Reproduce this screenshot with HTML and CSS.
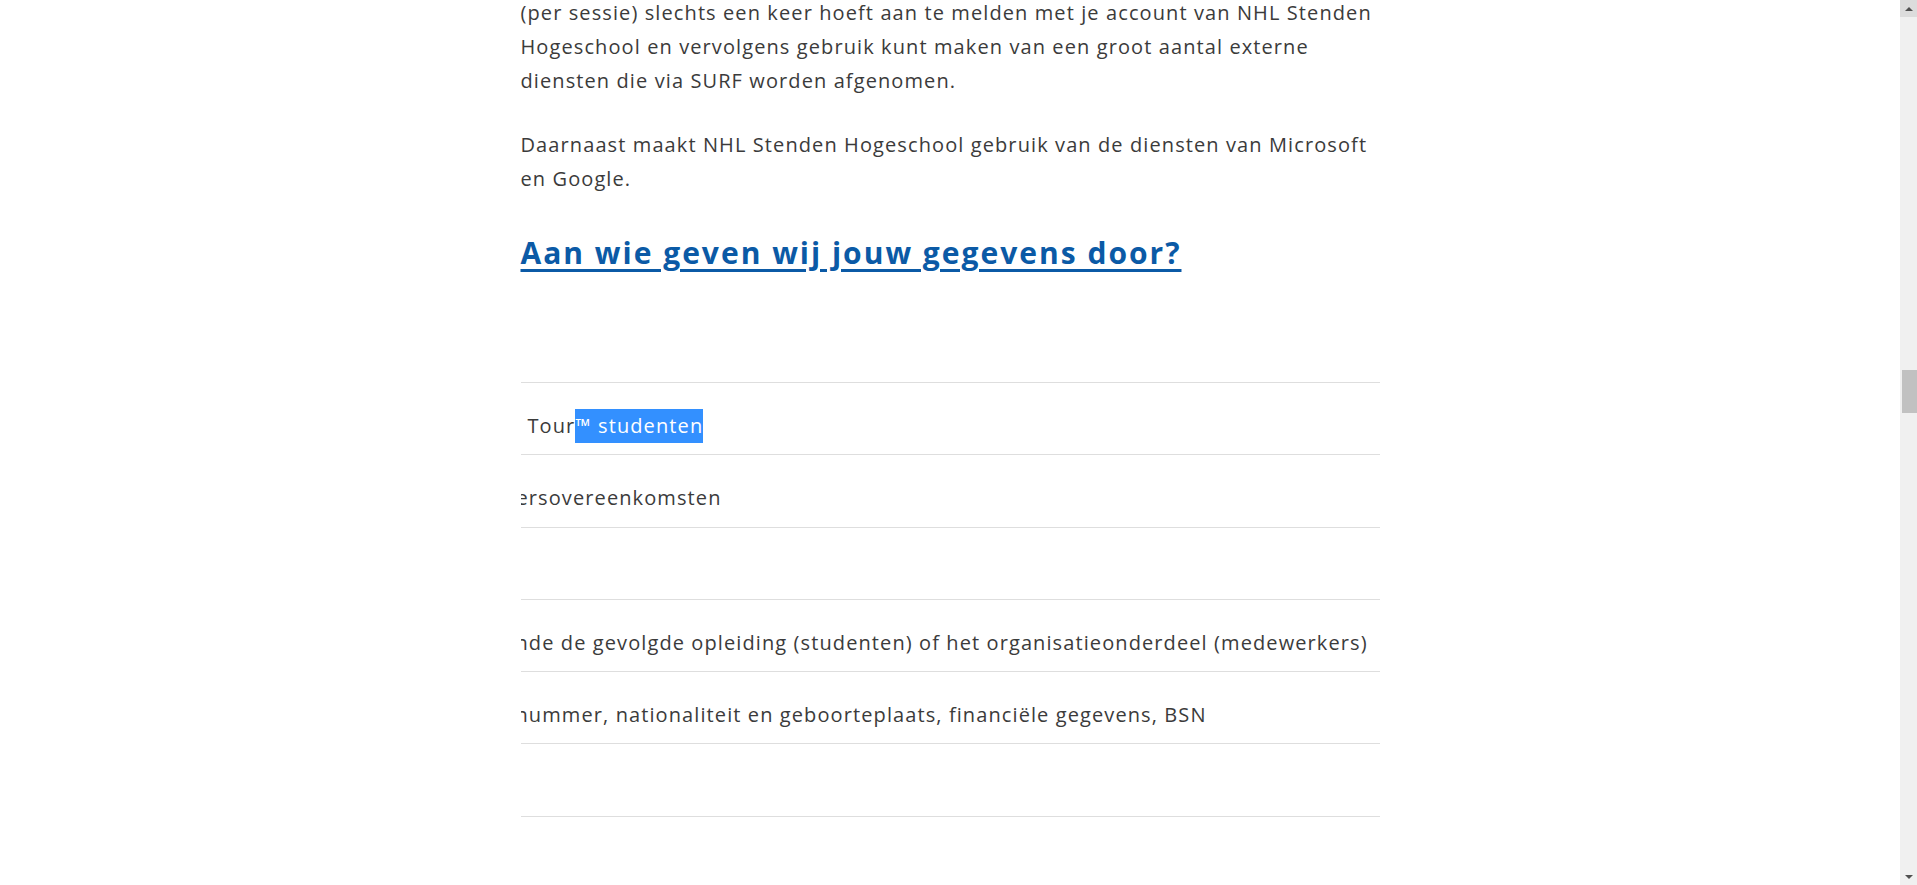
FILE: index.html
```html
<!DOCTYPE html>
<html lang="nl">
<head>
<meta charset="utf-8">
<title>Privacy</title>
<link rel="stylesheet" href="styles.css">
</head>
<body>
<div class="page">
  <div class="viewport">
    <main class="content">
      <p class="para">(per sessie) slechts een keer hoeft aan te melden met je account van NHL Stenden Hogeschool en vervolgens gebruik kunt maken van een groot aantal externe diensten die via SURF worden afgenomen.</p>
      <p class="para">Daarnaast maakt NHL Stenden Hogeschool gebruik van de diensten van Microsoft en Google.</p>
      <h2 class="heading"><a href="#" class="heading-link">Aan wie geven wij jouw gegevens door?</a></h2>
      <div class="table">
        <div class="row"><span class="cell cell-tour">Tour<span class="selected">™ studenten</span></span></div>
        <div class="row"><span class="cell cell-clip-e">ersovereenkomsten</span></div>
        <div class="row"><span class="cell"></span></div>
        <div class="row"><span class="cell cell-clip-n">nde de gevolgde opleiding (studenten) of het organisatieonderdeel (medewerkers)</span></div>
        <div class="row"><span class="cell cell-clip-n">nummer, nationaliteit en geboorteplaats, financiële gegevens, BSN</span></div>
        <div class="row"><span class="cell"></span></div>
        <div class="row row-last"><span class="cell"></span></div>
      </div>
    </main>
  </div>
  <div class="scrollbar">
    <div class="sb-btn sb-up"><span class="arrow-up"></span></div>
    <div class="sb-track"><div class="sb-thumb"></div></div>
    <div class="sb-btn sb-down"><span class="arrow-down"></span></div>
  </div>
</div>
</body>
</html>
```
FILE: styles.css
```css
html, body {
  margin: 0;
  padding: 0;
  background: #ffffff;
}
body {
  font-family: "Open Sans", "Liberation Sans", sans-serif;
  color: #3b3b3b;
}
.page {
  display: flex;
  width: 1917px;
  height: 885px;
  overflow: hidden;
}
.viewport {
  flex: 1;
  overflow: hidden;
}
.content {
  width: 859px;
  margin: -4px auto 0;
}
.para {
  margin: 0 0 30px;
  font-size: 20px;
  line-height: 34px;
  letter-spacing: 1.1px;
}
.heading {
  margin: 0;
  padding-top: 5px;
  font-size: 30px;
  line-height: 44px;
  font-weight: 700;
  letter-spacing: 2px;
}
.heading-link {
  color: #0b5aa6;
  text-decoration: underline;
  text-decoration-thickness: 3px;
  text-underline-offset: 5px;
}
.table {
  margin-top: 107px;
  overflow: hidden;
}
.row {
  box-sizing: border-box;
  height: 72.3px;
  border-top: 1px solid #dedede;
  display: flex;
  align-items: flex-start;
  padding-top: 26px;
  font-size: 20px;
  letter-spacing: 1.1px;
  white-space: nowrap;
}
.cell {
  display: block;
  line-height: 34px;
}
.cell-tour {
  padding-left: 7px;
}
.cell-clip-e {
  margin-left: -4px;
}
.cell-clip-n {
  margin-left: -5px;
}
.selected {
  display: inline-block;
  line-height: 34px;
  background: #3390ff;
  color: #ffffff;
}
.scrollbar {
  width: 17px;
  height: 885px;
  background: #f0f0f0;
  display: flex;
  flex-direction: column;
}
.sb-btn {
  height: 17px;
  display: flex;
  align-items: center;
  justify-content: center;
}
.sb-up {
  background: #dcdcdc;
}
.arrow-up {
  width: 0;
  height: 0;
  border-left: 4px solid transparent;
  border-right: 4px solid transparent;
  border-bottom: 4px solid #505050;
}
.arrow-down {
  width: 0;
  height: 0;
  border-left: 4px solid transparent;
  border-right: 4px solid transparent;
  border-top: 4px solid #505050;
}
.sb-track {
  flex: 1;
  padding-top: 353px;
  box-sizing: border-box;
}
.sb-thumb {
  width: 15px;
  margin-left: 2px;
  height: 43px;
  background: #c1c1c1;
}
```
